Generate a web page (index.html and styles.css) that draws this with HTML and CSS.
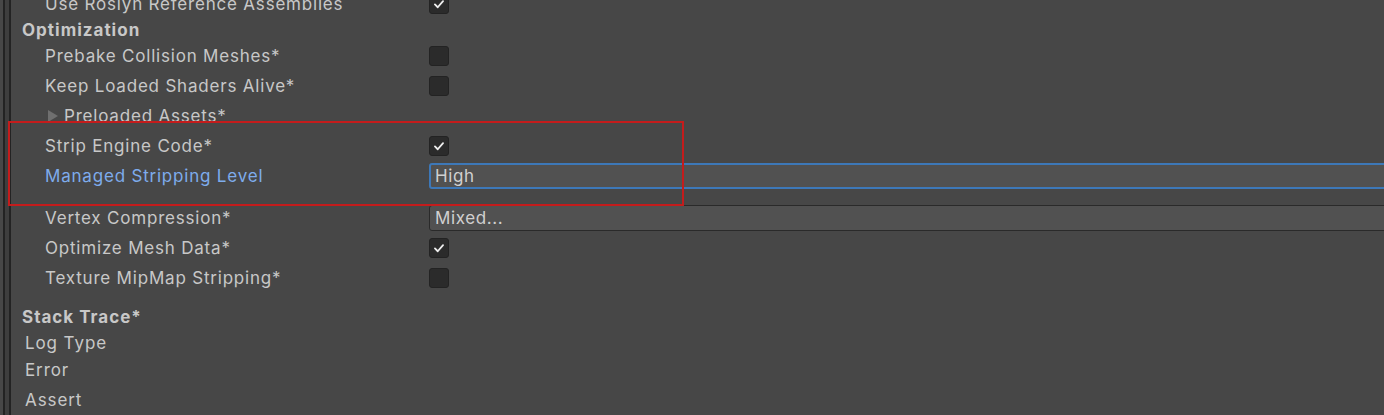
FILE: index.html
```html
<!DOCTYPE html>
<html>
<head>
<meta charset="utf-8">
<link rel="stylesheet" href="styles.css">
</head>
<body>
<div class="app">
  <div class="gutter"><div class="lines"></div></div>
  <div class="content">
    <div class="rows">
      <div class="row">
        <div class="label">Use Roslyn Reference Assemblies</div>
        <div class="check on"><svg viewBox="0 0 20 20"><path d="M5.5 10.5 L8.6 13.6 L14.5 6.8" /></svg></div>
      </div>
      <div class="header h-opt">Optimization</div>
      <div class="row">
        <div class="label">Prebake Collision Meshes*</div>
        <div class="check"></div>
      </div>
      <div class="row">
        <div class="label">Keep Loaded Shaders Alive*</div>
        <div class="check"></div>
      </div>
      <div class="row">
        <div class="label foldout"><span class="tri"></span>Preloaded Assets*</div>
      </div>
      <div class="row">
        <div class="label">Strip Engine Code*</div>
        <div class="check on"><svg viewBox="0 0 20 20"><path d="M5.5 10.5 L8.6 13.6 L14.5 6.8" /></svg></div>
      </div>
      <div class="row">
        <div class="label blue">Managed Stripping Level</div>
        <div class="field focused">High</div>
      </div>
      <div class="row r-vertex">
        <div class="label">Vertex Compression*</div>
        <div class="field">Mixed...</div>
      </div>
      <div class="row">
        <div class="label">Optimize Mesh Data*</div>
        <div class="check on"><svg viewBox="0 0 20 20"><path d="M5.5 10.5 L8.6 13.6 L14.5 6.8" /></svg></div>
      </div>
      <div class="row">
        <div class="label">Texture MipMap Stripping*</div>
        <div class="check"></div>
      </div>
      <div class="header h-stack">Stack Trace*</div>
      <div class="item i-log">Log Type</div>
      <div class="item i-err">Error</div>
      <div class="item i-assert">Assert</div>
    </div>
    <div class="highlight"></div>
  </div>
</div>
</body>
</html>
```
FILE: styles.css
```css
html, body {
  margin: 0;
  padding: 0;
  background: #474747;
  overflow: hidden;
}
body {
  width: 1384px;
  height: 415px;
  font-family: Inter, "Noto Sans", sans-serif;
  font-size: 17px;
  color: #c8c8c8;
}
.app {
  display: flex;
  height: 415px;
}
.gutter {
  width: 11px;
  flex: none;
  background: #474747;
}
.lines {
  margin-left: 3px;
  width: 4px;
  height: 100%;
  border-left: 2px solid #232323;
  border-right: 2px solid #232323;
  background: #3e3e3e;
}
.content {
  position: relative;
  flex: 1;
  min-width: 0;
}
.rows {
  display: flex;
  flex-direction: column;
  margin-top: -11px;
}
.row {
  display: flex;
  align-items: center;
  height: 30px;
}
.label {
  width: 384px;
  padding-left: 34px;
  flex: none;
  white-space: nowrap;
  letter-spacing: 0.8px;
}
.label.blue {
  color: #7eacec;
}
.foldout {
  display: flex;
  align-items: center;
}
.tri {
  width: 0;
  height: 0;
  margin-left: 3px;
  margin-right: 6px;
  border-top: 6px solid transparent;
  border-bottom: 6px solid transparent;
  border-left: 10px solid #6f6f6f;
}
.check {
  width: 18px;
  height: 18px;
  border: 1px solid #232323;
  border-radius: 3px;
  background: #2b2b2b;
  flex: none;
}
.check svg {
  width: 18px;
  height: 18px;
  display: block;
}
.check svg path {
  fill: none;
  stroke: #eeeeee;
  stroke-width: 2;
  stroke-linecap: round;
  stroke-linejoin: round;
}
.field {
  flex: 1;
  height: 24px;
  margin-right: -20px;
  background: #515151;
  border: 1px solid #2a2a2a;
  border-radius: 3px;
  padding-left: 5px;
  display: flex;
  align-items: center;
  color: #d0d0d0;
  letter-spacing: 0.6px;
}
.field.focused {
  height: 22px;
  border: 2px solid #3d78b8;
  padding-left: 4px;
}
.r-vertex {
  margin-top: 12px;
}
.header {
  font-weight: 700;
  padding-left: 11px;
  color: #c8c8c8;
  letter-spacing: 1px;
  display: flex;
  align-items: center;
}
.h-opt {
  height: 22px;
}
.h-stack {
  height: 24px;
  margin-top: 12px;
}
.item {
  padding-left: 14px;
  height: 26px;
  display: flex;
  align-items: center;
  letter-spacing: 0.9px;
}
.i-log {
  margin-top: 1px;
}
.i-err {
  height: 28px;
}
.i-assert {
  height: 30px;
  margin-top: 1px;
}
.highlight {
  position: absolute;
  left: -3px;
  top: 121px;
  width: 672px;
  height: 81px;
  border: 2px solid #c41c1c;
  pointer-events: none;
}
```
